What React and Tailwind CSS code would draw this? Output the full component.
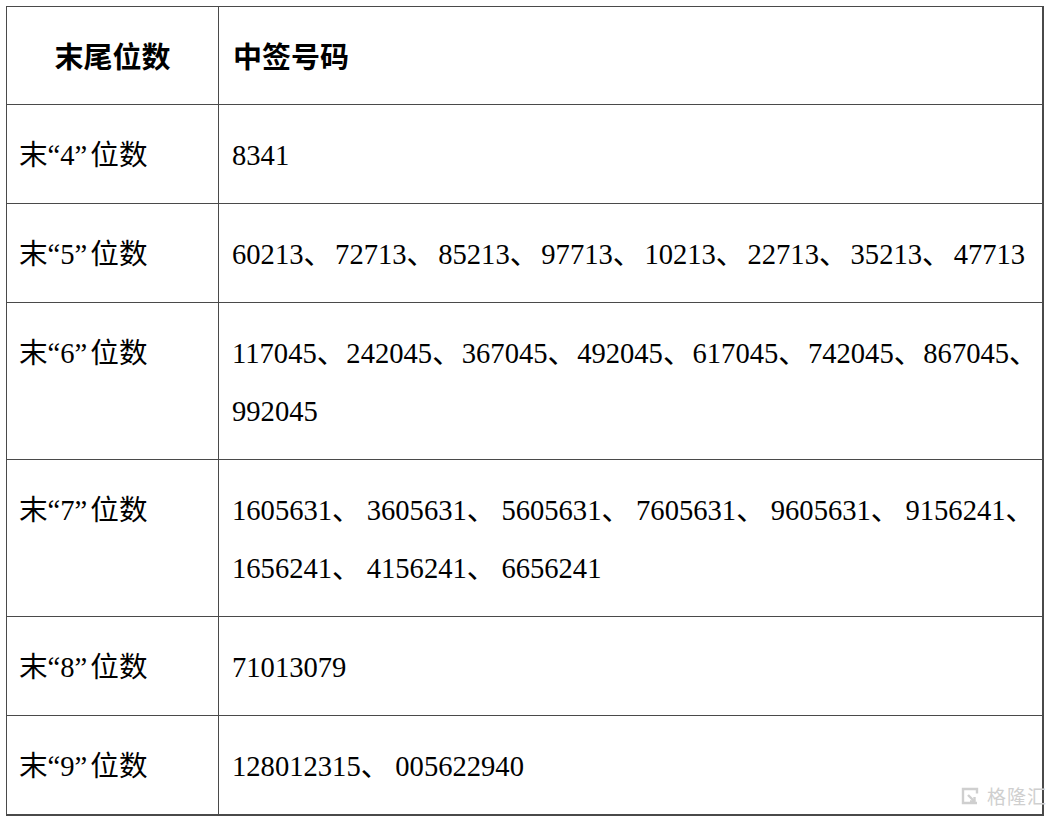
const ROWS = [
  { n: '4', lines: [['8341']], gap: 'gap-x-0' },
  { n: '5', lines: [['60213', '72713', '85213', '97713', '10213', '22713', '35213', '47713']], gap: 'gap-x-[3px]' },
  { n: '6', lines: [['117045', '242045', '367045', '492045', '617045', '742045', '867045', '992045']], gap: 'gap-x-[1px]' },
  { n: '7', lines: [['1605631', '3605631', '5605631', '7605631', '9605631', '9156241', '1656241', '4156241', '6656241']], gap: 'gap-x-[6px]' },
  { n: '8', lines: [['71013079']], gap: 'gap-x-0' },
  { n: '9', lines: [['128012315', '005622940']], gap: 'gap-x-[6px]' },
]

const SERIF = { fontFamily: "'Liberation Serif', 'Noto Sans CJK SC', serif" }

function Watermark() {
  return (
    <div className="absolute left-[961px] top-[786px] flex items-center gap-[8px] text-[#cfcfcf] pointer-events-none">
      <svg width="18" height="18" viewBox="0 0 18 18" fill="none" stroke="currentColor" strokeWidth="2.4">
        <path d="M16 6.5V2H2v14h14" />
        <path d="M7 8l6.5 6.5" />
        <path d="M9 14.5h4.5V10" />
      </svg>
      <span className="text-[19px] leading-none tracking-[1px]" style={{ fontFamily: "'Noto Sans CJK SC', sans-serif" }}>格隆汇</span>
    </div>
  )
}

export default function App() {
  return (
    <div className="relative w-[1050px] h-[820px] bg-white pl-[6px] pt-[6px] overflow-hidden">
      <table className="border-collapse table-fixed w-[1038px] text-black" style={SERIF}>
        <colgroup>
          <col className="w-[212px]" />
          <col />
        </colgroup>
        <thead>
          <tr>
            <th className="h-[98px] border border-[#4a4a4a] align-middle text-center font-bold text-[29px]"
              style={{ fontFamily: "'Noto Sans CJK SC', sans-serif" }}>
              末尾位数
            </th>
            <th className="h-[98px] border border-[#4a4a4a] border-r-2 align-middle text-left pl-[14px] font-bold text-[29px]"
              style={{ fontFamily: "'Noto Sans CJK SC', sans-serif" }}>
              中签号码
            </th>
          </tr>
        </thead>
        <tbody>
          {ROWS.map((r, i) => {
            const last = i === ROWS.length - 1
            return (
              <tr key={r.n}>
                <td className={`border border-[#4a4a4a] align-top pl-[12px] pt-[22px] pb-[18px] text-[28.6px] leading-[58px] font-normal whitespace-nowrap ${last ? 'border-b-2' : ''}`}>
                  末“{r.n}”<span className="ml-[3px]">位数</span>
                </td>
                <td className={`border border-[#4a4a4a] border-r-2 align-top pl-[13px] pr-0 pt-[22px] pb-[18px] ${last ? 'border-b-2' : ''}`}>
                  {r.lines.map((toks, j) => (
                    <div key={j} className={`flex flex-wrap w-[810px] ${r.gap} text-[28.6px] leading-[58px]`}>
                      {toks.map((t, k) => (
                        <span key={k} className="whitespace-nowrap">{t}{k < toks.length - 1 ? '、' : ''}</span>
                      ))}
                    </div>
                  ))}
                </td>
              </tr>
            )
          })}
        </tbody>
      </table>
      <Watermark />
    </div>
  )
}
